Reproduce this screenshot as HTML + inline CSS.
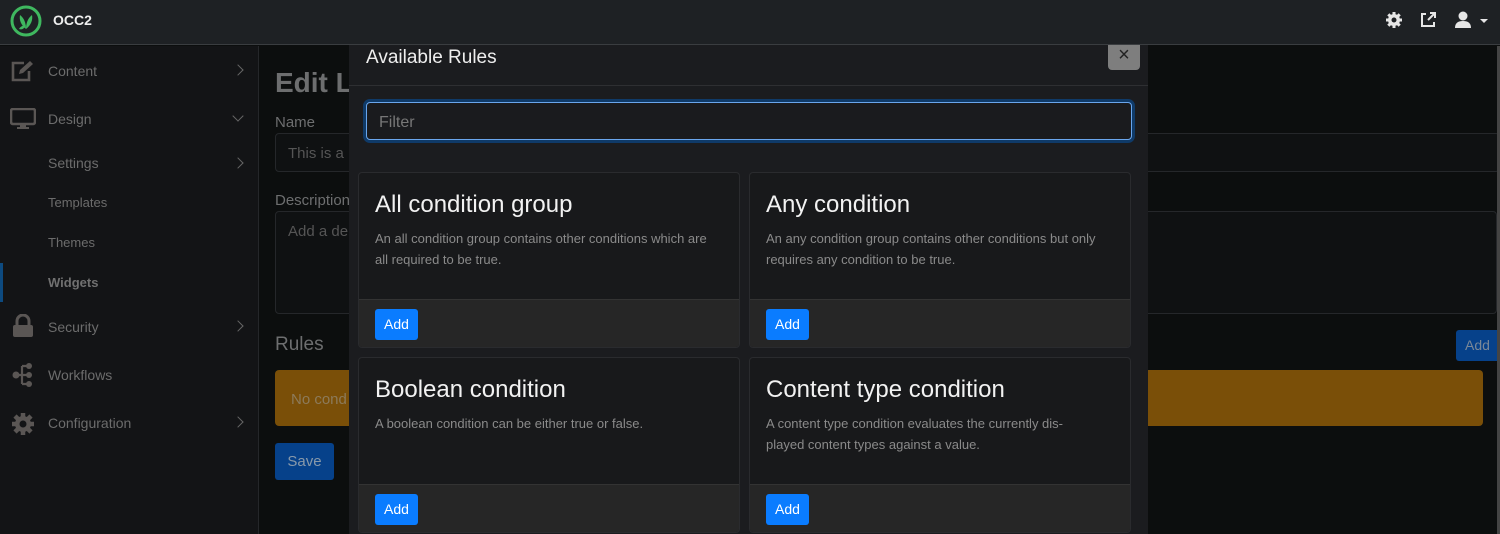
<!DOCTYPE html>
<html><head><meta charset="utf-8"><style>
*{box-sizing:border-box;margin:0;padding:0}
body{width:1500px;height:534px;overflow:hidden;background:#0c0e0e;font-family:"Liberation Sans",sans-serif;position:relative}
.abs{position:absolute}
.top{left:0;top:0;width:1500px;height:45px;background:#1e2124;border-bottom:1px solid #3a3d40}
.side{left:0;top:46px;width:259px;height:488px;background:#131416;border-right:1px solid #25272a}
.nav{position:absolute;left:48px;font-size:14px;color:#6c6c6c}
.chev{position:absolute;left:234px;width:8px;height:8px;border-right:1.6px solid #666;border-top:1.6px solid #666;transform:rotate(45deg)}
.mc{color:#6d6e6f}
.modal{left:349px;top:45px;width:799px;height:489px;background:#1b1c1f}
.card{position:absolute;width:382px;height:176px;background:#18191b;border:1px solid #2a2b2e;border-radius:4px;overflow:hidden}
.card h3{position:absolute;left:16px;top:18px;font-size:24px;font-weight:normal;color:#f2f2f2}
.card p{position:absolute;left:16px;top:55px;width:332px;font-size:13px;line-height:21px;color:#8a8a8a}
.card .ft{position:absolute;left:0;bottom:0;width:100%;height:48px;background:#262626;border-top:1px solid #333}
.card .btn{position:absolute;left:16px;top:9px;width:43px;height:31px;background:#0a7cff;color:#fff;font-size:14px;line-height:31px;text-align:center;border-radius:3px}
</style></head><body>
<div class="abs top"></div>
<svg class="abs" style="left:10px;top:5px" width="32" height="32" viewBox="0 0 32 32"><circle cx="16" cy="16" r="14" fill="none" stroke="#3fb85f" stroke-width="3"/><path d="M16 24 C16 18 14 13 10 10 C9 15 11 20 16 24Z M16 24 C16 18 18 13 22 10 C23 15 21 20 16 24Z M16 20 C13 20 10 22 9 24 C12 25 14 24 16 20Z" fill="#3fb85f"/></svg>
<div class="abs" style="left:53px;top:12px;color:#eee;font-weight:bold;font-size:14px">OCC2</div>
<svg class="abs" style="left:1385px;top:11px" width="18" height="18" viewBox="0 0 18 18"><circle cx="9" cy="9" r="6" fill="#e6e6e6"/><g stroke="#e6e6e6" stroke-width="3"><line x1="9" y1="1" x2="9" y2="17"/><line x1="1" y1="9" x2="17" y2="9"/><line x1="3.3" y1="3.3" x2="14.7" y2="14.7"/><line x1="14.7" y1="3.3" x2="3.3" y2="14.7"/></g><circle cx="9" cy="9" r="2.5" fill="#1e2124"/></svg>
<svg class="abs" style="left:1419px;top:11px" width="18" height="18" viewBox="0 0 18 18"><path d="M7 3H3v12h12v-4" fill="none" stroke="#e6e6e6" stroke-width="2"/><path d="M9 9L16 2M11 2h5v5" fill="none" stroke="#e6e6e6" stroke-width="2"/></svg>
<svg class="abs" style="left:1454px;top:10px" width="40" height="20" viewBox="0 0 40 20"><circle cx="9" cy="6" r="4.5" fill="#e6e6e6"/><path d="M1 18c0-5 3-7 8-7s8 2 8 7z" fill="#e6e6e6"/><path d="M26 9h8l-4 4z" fill="#e6e6e6"/></svg>

<div class="abs side"></div>
<div class="abs" style="left:0;top:263px;width:3px;height:39px;background:#0d4a7f"></div>
<svg class="abs" style="left:10px;top:60px" width="24" height="22" viewBox="0 0 24 22"><path d="M14 3H3v17h16v-9" fill="none" stroke="#5a5654" stroke-width="2.6"/><path d="M9 14l1-4 10-9 3 3-10 9z" fill="#5a5654"/></svg>
<div class="nav" style="top:63px">Content</div><div class="chev" style="top:66px"></div>
<svg class="abs" style="left:10px;top:108px" width="26" height="22" viewBox="0 0 26 22"><rect x="1" y="1" width="24" height="15" rx="2" fill="none" stroke="#5a5654" stroke-width="2.6"/><rect x="10" y="16" width="6" height="3" fill="#5a5654"/><rect x="7" y="19" width="12" height="2" fill="#5a5654"/></svg>
<div class="nav" style="top:111px">Design</div><div class="chev" style="top:112px;transform:rotate(135deg)"></div>
<div class="nav" style="top:155px">Settings</div><div class="chev" style="top:159px"></div>
<div class="nav" style="top:195px;font-size:13px">Templates</div>
<div class="nav" style="top:235px;font-size:13px">Themes</div>
<div class="nav" style="top:275px;font-weight:bold;font-size:13px;color:#707070">Widgets</div>
<svg class="abs" style="left:12px;top:314px" width="22" height="24" viewBox="0 0 22 24"><path d="M5 11V7a6 6 0 0112 0v4" fill="none" stroke="#5a5654" stroke-width="3"/><rect x="1" y="11" width="20" height="12" rx="2" fill="#5a5654"/></svg>
<div class="nav" style="top:319px">Security</div><div class="chev" style="top:322px"></div>
<svg class="abs" style="left:12px;top:362px" width="22" height="26" viewBox="0 0 22 26"><circle cx="4" cy="13" r="3.5" fill="#5a5654"/><circle cx="17" cy="4" r="3" fill="#5a5654"/><circle cx="17" cy="13" r="3" fill="#5a5654"/><circle cx="17" cy="22" r="3" fill="#5a5654"/><path d="M4 13h6M10 4v18M10 4h6M10 13h6M10 22h6" stroke="#5a5654" stroke-width="2.2" fill="none"/></svg>
<div class="nav" style="top:367px">Workflows</div>
<svg class="abs" style="left:11px;top:412px" width="24" height="24" viewBox="0 0 24 24"><circle cx="12" cy="12" r="8" fill="#5a5654"/><g stroke="#5a5654" stroke-width="4.5"><line x1="12" y1="1" x2="12" y2="23"/><line x1="1" y1="12" x2="23" y2="12"/><line x1="4" y1="4" x2="20" y2="20"/><line x1="20" y1="4" x2="4" y2="20"/></g><circle cx="12" cy="12" r="3.5" fill="#131416"/></svg>
<div class="nav" style="top:415px">Configuration</div><div class="chev" style="top:418px"></div>

<div class="abs mc" style="left:275px;top:67px;font-size:28px;font-weight:bold">Edit La</div>
<div class="abs mc" style="left:275px;top:114px;font-size:15px">Name</div>
<div class="abs" style="left:275px;top:133px;width:1225px;height:39px;border:1px solid #25272a;border-radius:4px;background:#0f1112"></div>
<div class="abs" style="left:288px;top:145px;font-size:15px;color:#555">This is a l</div>
<div class="abs mc" style="left:275px;top:192px;font-size:15px">Description</div>
<div class="abs" style="left:275px;top:211px;width:1222px;height:103px;border:1px solid #25272a;border-radius:4px;background:#0f1112"></div>
<div class="abs" style="left:288px;top:223px;font-size:15px;color:#555">Add a de</div>
<div class="abs mc" style="left:275px;top:334px;font-size:19px">Rules</div>
<div class="abs" style="left:1456px;top:330px;width:44px;height:31px;background:#06418a;border-radius:3px;color:#7a8898;font-size:14px;line-height:31px;padding-left:9px">Add</div>
<div class="abs" style="left:275px;top:370px;width:1208px;height:56px;background:#7a4f08;border-radius:4px"></div>
<div class="abs" style="left:291px;top:391px;font-size:15px;color:#8c7a5a">No cond</div>
<div class="abs" style="left:275px;top:443px;width:59px;height:37px;background:#06418a;border-radius:3px;color:#8899aa;font-size:15px;line-height:37px;text-align:center">Save</div>
<div class="abs" style="left:1497px;top:46px;width:3px;height:488px;background:#444"></div>

<div class="abs modal">
 <div class="abs" style="left:0;top:0;width:799px;height:41px;border-bottom:1px solid #2e2f32"></div>
 <div class="abs" style="left:17px;top:2px;font-size:19px;color:#eee">Available Rules</div>
 <div class="abs" style="left:759px;top:0;width:32px;height:25px;background:#7e7e7e;border-radius:0 0 4px 4px;color:#222;font-size:20px;text-align:center;line-height:20px">×</div>
 <div class="abs" style="left:17px;top:57px;width:766px;height:38px;border:1px solid #6aa6ec;border-radius:4px;background:#1a1b1e;box-shadow:0 0 0 3px #0f3a68"></div>
 <div class="abs" style="left:30px;top:69px;font-size:16px;color:#777">Filter</div>
 <div class="card" style="left:9px;top:127px"><h3>All condition group</h3><p>An all condition group contains other conditions which are all required to be true.</p><div class="ft"><div class="btn">Add</div></div></div>
 <div class="card" style="left:400px;top:127px"><h3>Any condition</h3><p>An any condition group contains other conditions but only requires any condition to be true.</p><div class="ft"><div class="btn">Add</div></div></div>
 <div class="card" style="left:9px;top:312px"><h3>Boolean condition</h3><p>A boolean condition can be either true or false.</p><div class="ft"><div class="btn">Add</div></div></div>
 <div class="card" style="left:400px;top:312px"><h3>Content type condition</h3><p>A content type condition evaluates the currently dis-played content types against a value.</p><div class="ft"><div class="btn">Add</div></div></div>
</div>
</body></html>
